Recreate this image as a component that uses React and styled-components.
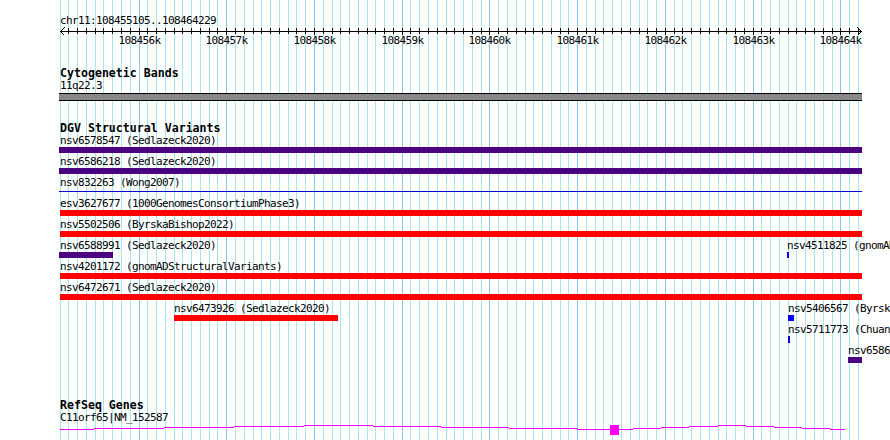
import React from 'react';
import styled, { createGlobalStyle } from 'styled-components';

// genomic window shown in the panel
const START = 108455105;
const LEFT = 60;
const BP = 0.08773; // px per bp
const toX = (pos) => (pos - START) * BP;

const GlobalStyle = createGlobalStyle`
  html, body {
    margin: 0;
    padding: 0;
    background: #fff;
  }
  body {
    font-family: "DejaVu Sans Mono", "Liberation Mono", monospace;
    color: #000;
  }
`;

const Page = styled.div`
  position: relative;
  width: 890px;
  height: 440px;
  overflow: hidden;
  background: #fff;
`;

const GridLayer = styled.svg`
  position: absolute;
  top: 0;
  left: 0;
  width: 890px;
  height: 440px;
`;

const Tracks = styled.div`
  position: relative;
  display: flex;
  flex-direction: column;
  margin-left: ${LEFT}px;
  width: 802px;
  padding-top: 15px;
`;

// 6px cells like the server's small bitmap font
const smallFont = `
  font-size: 11px;
  letter-spacing: -0.62px;
  line-height: 11px;
  white-space: nowrap;
`;

const Small = styled.div`
  ${smallFont}
  margin-top: ${(p) => p.$gap || 0}px;
`;

const Title = styled.div`
  font-size: 11.6px;
  font-weight: bold;
  line-height: 12px;
  white-space: nowrap;
  margin-top: ${(p) => p.$gap || 0}px;
`;

const Ruler = styled.svg`
  display: block;
  width: 803px;
  height: 22px;
  overflow: visible;
  font-size: 11px;
  letter-spacing: -0.62px;
`;

const Band = styled.div`
  box-sizing: border-box;
  margin-top: 2px;
  margin-left: -1px;
  width: 803px;
  height: 8px;
  background: #888888;
  border-top: 1px solid #000;
  border-bottom: 1px solid #000;
`;

const Rows = styled.div`
  display: flex;
  flex-direction: column;
  margin-top: 1px;
`;

const Row = styled.div`
  position: relative;
  height: 21px;
`;

const Feature = styled.div`
  position: absolute;
  top: 0;
  display: flex;
  flex-direction: column;
  align-items: flex-start;
`;

const Label = styled.span`
  ${smallFont}
  padding-left: ${(p) => p.$pad || 0}px;
`;

const COLORS = {
  purple: '#4b0082',
  red: '#ff0000',
  blue: '#0000ff',
  line: '#0000d0',
};

const Bar = styled.div`
  margin-top: ${(p) => (p.$kind === 'line' ? 3 : 1)}px;
  height: ${(p) => (p.$kind === 'line' ? 1 : p.$h || 6)}px;
  background: ${(p) => COLORS[p.$kind]};
`;

const GeneTrack = styled.svg`
  display: block;
  width: 802px;
  height: 14px;
`;

const rows = [
  [{ name: 'nsv6578547 (Sedlazeck2020)', x: 59, w: 803, kind: 'purple' }],
  [{ name: 'nsv6586218 (Sedlazeck2020)', x: 59, w: 803, kind: 'purple' }],
  [{ name: 'nsv832263 (Wong2007)', x: 59, w: 803, kind: 'line' }],
  [{ name: 'esv3627677 (1000GenomesConsortiumPhase3)', x: 60, w: 802, kind: 'red' }],
  [{ name: 'nsv5502506 (ByrskaBishop2022)', x: 60, w: 802, kind: 'red' }],
  [
    { name: 'nsv6588991 (Sedlazeck2020)', x: 59, w: 54, kind: 'purple' },
    { name: 'nsv4511825 (gnomADStructuralVariants)', x: 787, w: 2, kind: 'blue' },
  ],
  [{ name: 'nsv4201172 (gnomADStructuralVariants)', x: 60, w: 802, kind: 'red' }],
  [{ name: 'nsv6472671 (Sedlazeck2020)', x: 60, w: 802, kind: 'red' }],
  [
    { name: 'nsv6473926 (Sedlazeck2020)', x: 174, w: 164, kind: 'red' },
    { name: 'nsv5406567 (ByrskaBishop2022)', x: 788, w: 6, kind: 'blue' },
  ],
  [{ name: 'nsv5711773 (ChuangGenomeBiology2021)', x: 788, w: 2, kind: 'blue', h: 7 }],
  [{ name: 'nsv6586744 (Sedlazeck2020)', x: 848, w: 14, kind: 'purple' }],
];

// intron hat steps [x0, x1, y] and exon, absolute page coords
const GENE_TOP = 423;
const geneSteps = [
  [60, 94, 429], [94, 164, 428], [164, 234, 427], [234, 304, 426], [304, 373, 425],
  [373, 441, 426], [441, 509, 427], [509, 577, 428], [577, 610, 429],
  [619, 633, 429], [633, 661, 428], [661, 689, 427], [689, 718, 426], [718, 746, 425],
  [746, 774, 426], [774, 802, 427], [802, 830, 428], [830, 845, 429],
];

const gridLines = [];
for (let pos = 108455100; pos <= 108464200; pos += 100) {
  gridLines.push({ x: Math.round(LEFT + toX(pos)), major: pos % 1000 === 0 });
}

const majors = [];
for (let k = 108456; k <= 108464; k++) majors.push(k);

function Grid() {
  return (
    <GridLayer shapeRendering="crispEdges">
      {gridLines.map((l) => (
        <rect key={l.x} x={l.x} y={0} width={1} height={440} fill={l.major ? '#86c8ec' : '#a8e6ee'} />
      ))}
    </GridLayer>
  );
}

function Scale() {
  return (
    <Ruler shapeRendering="crispEdges">
      <rect x={0} y={5} width={801} height={1} fill="#000" />
      <path d="M4.5 1.5 L0.5 5.5 L4.5 9.5" fill="none" stroke="#000" strokeWidth="1" />
      <path d="M797.5 1.5 L801.5 5.5 L797.5 9.5" fill="none" stroke="#000" strokeWidth="1" />
      {gridLines.slice(1).map((l) => (
        <rect key={l.x} x={l.x - LEFT} y={2} width={1} height={l.major ? 7 : 6} fill="#000" />
      ))}
      {majors.map((k) => (
        <text key={k} x={Math.round(toX(k * 1000)) + 0.5} y={18} textAnchor="middle" fill="#000">
          {k}k
        </text>
      ))}
    </Ruler>
  );
}

function Gene() {
  return (
    <GeneTrack shapeRendering="crispEdges">
      {geneSteps.map(([x0, x1, y]) => (
        <rect key={x0} x={x0 - LEFT} y={y - GENE_TOP} width={x1 - x0} height={1} fill="#ff00ff" />
      ))}
      <rect x={610 - LEFT} y={425 - GENE_TOP} width={9} height={10} fill="#ff00ff" />
    </GeneTrack>
  );
}

export default function App() {
  return (
    <Page>
      <GlobalStyle />
      <Grid />
      <Tracks>
        <Small>chr11:108455105..108464229</Small>
        <Scale />

        <Title $gap={19}>Cytogenetic Bands</Title>
        <Small $gap={1}>11q22.3</Small>
        <Band />

        <Title $gap={21}>DGV Structural Variants</Title>
        <Rows>
          {rows.map((row, i) => (
            <Row key={i}>
              {row.map((f) => (
                <Feature key={f.name} style={{ left: f.x - LEFT, width: f.w }}>
                  <Label $pad={f.x < LEFT ? LEFT - f.x : 0}>{f.name}</Label>
                  <Bar $kind={f.kind} $h={f.h} style={{ width: f.w }} />
                </Feature>
              ))}
            </Row>
          ))}
        </Rows>

        <Title $gap={33}>RefSeq Genes</Title>
        <Small $gap={1}>C11orf65|NM_152587</Small>
        <Gene />
      </Tracks>
    </Page>
  );
}
